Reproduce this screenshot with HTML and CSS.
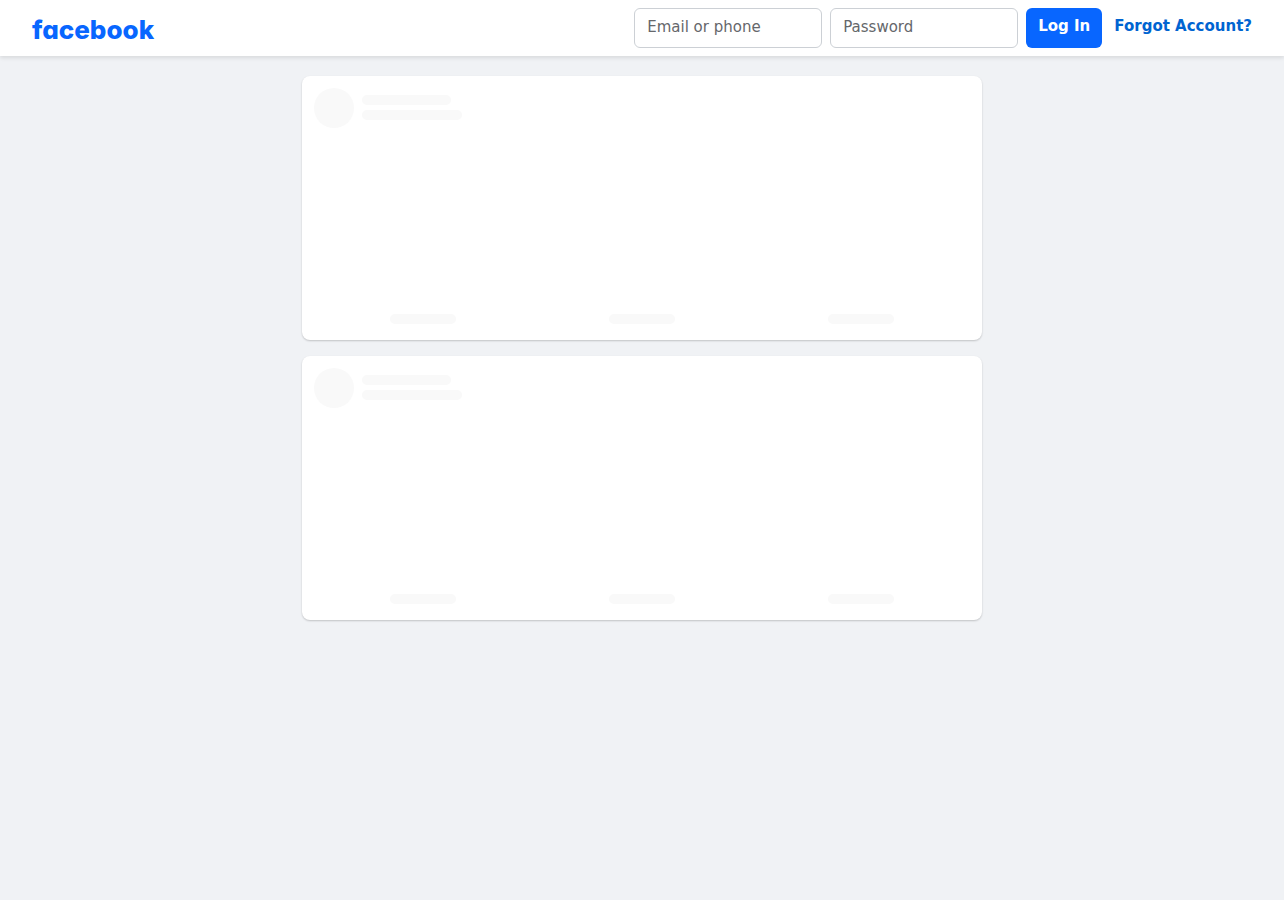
FILE: index.html
```html
<!DOCTYPE html>
<html lang="en">
<head>
    <meta charset="utf-8">
    <title>Facebook</title>
    <link rel="stylesheet" href="styles.css">
</head>
<body>
    <header class="topbar">
        <a class="logo" href="#">facebook</a>
        <form class="login">
            <input type="text" name="email" placeholder="Email or phone" aria-label="Email or phone">
            <input type="password" name="pass" placeholder="Password" aria-label="Password">
            <button type="submit">Log In</button>
            <a class="forgot" href="#">Forgot Account?</a>
        </form>
    </header>
    <main class="feed">
        <div class="card">
            <div class="card-head">
                <div class="avatar"></div>
                <div class="lines">
                    <div class="bar name"></div>
                    <div class="bar date"></div>
                </div>
            </div>
            <div class="card-actions">
                <div class="bar"></div>
                <div class="bar"></div>
                <div class="bar"></div>
            </div>
        </div>
        <div class="card">
            <div class="card-head">
                <div class="avatar"></div>
                <div class="lines">
                    <div class="bar name"></div>
                    <div class="bar date"></div>
                </div>
            </div>
            <div class="card-actions">
                <div class="bar"></div>
                <div class="bar"></div>
                <div class="bar"></div>
            </div>
        </div>
    </main>
</body>
</html>
```
FILE: styles.css
```css
* {
    box-sizing: border-box;
}
body {
    margin: 0;
    background-color: #f0f2f5;
    font-family: "DejaVu Sans", sans-serif;
    font-size: 15px;
}
a {
    text-decoration: none;
}
.topbar {
    display: flex;
    align-items: center;
    justify-content: space-between;
    height: 56px;
    padding: 0 32px;
    background-color: #fff;
    box-shadow: 0 2px 4px rgba(0, 0, 0, 0.1);
}
.logo {
    padding-top: 4px;
    color: #0866ff;
    font-family: Inter, sans-serif;
    font-size: 26px;
    font-weight: 800;
    line-height: 32px;
    /* single-storey a */
    font-feature-settings: "cv11";
}
.login {
    display: flex;
    gap: 8px;
}
.login input {
    width: 188px;
    height: 40px;
    padding: 0 12px 2px;
    border: 1px solid #ccd0d5;
    border-radius: 6px;
    background-color: #fff;
    color: #1c1e21;
    font: inherit;
}
.login input::placeholder {
    color: #65676b;
}
.login button {
    height: 40px;
    padding: 0 12px 4px;
    border: none;
    border-radius: 6px;
    background-color: #0866ff;
    color: #fff;
    font: inherit;
    font-weight: 700;
}
.forgot {
    padding-left: 4px;
    color: #0064d1;
    font-weight: 700;
    line-height: 36px;
}
.feed {
    display: flex;
    flex-direction: column;
    gap: 16px;
    max-width: 680px;
    margin: 20px auto;
}
.card {
    display: flex;
    flex-direction: column;
    justify-content: space-between;
    min-height: 264px;
    padding: 12px 12px 16px;
    border-radius: 8px;
    background-color: #fff;
    box-shadow: 0 1px 2px rgba(0, 0, 0, 0.2);
}
.card-head {
    display: flex;
    gap: 8px;
}
.avatar {
    width: 40px;
    height: 40px;
    border-radius: 50%;
    background-color: #f9f9f9;
}
.lines {
    display: flex;
    flex-direction: column;
    gap: 5px;
    padding-top: 7px;
}
.bar {
    width: 66px;
    height: 10px;
    border-radius: 5px;
    background-color: #f9f9f9;
}
.bar.name {
    width: 89px;
}
.bar.date {
    width: 100px;
}
.card-actions {
    display: grid;
    grid-template-columns: repeat(3, 1fr);
    justify-items: center;
}
```
